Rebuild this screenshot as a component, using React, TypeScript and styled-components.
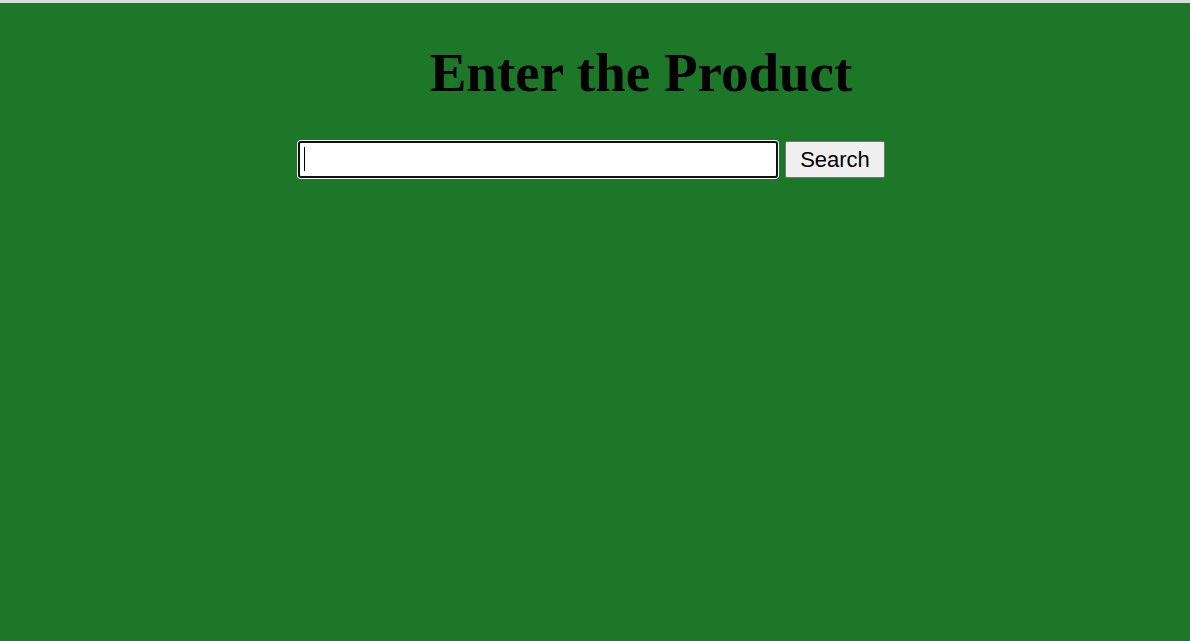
import React from "react";
import styled, { createGlobalStyle } from "styled-components";

const Global = createGlobalStyle`
  html, body { margin: 0; padding: 0; background: #1c7729; }
  #root { min-height: 100vh; }
`;

const Page = styled.div`
  min-height: 641px;
  background: #1c7729;
  border-top: 3px solid #dadada;
  box-sizing: border-box;
  display: flex;
  flex-direction: column;
  align-items: stretch;
`;

const Title = styled.h1`
  margin: 39px 0 0;
  padding-left: 92px;
  text-align: center;
  font-family: "Liberation Serif", "Times New Roman", serif;
  font-weight: bold;
  font-size: 55px;
  line-height: 62px;
  color: #000;
`;

const SearchRow = styled.form`
  margin-top: 36px;
  padding-right: 8px;
  display: flex;
  justify-content: center;
  align-items: center;
  gap: 6px;
`;

const InputWrap = styled.div`
  position: relative;
  display: flex;
`;

const SearchInput = styled.input`
  box-sizing: border-box;
  width: 480px;
  height: 37px;
  margin: 1px;
  border: 2px solid #101010;
  border-radius: 3px;
  box-shadow: 0 0 0 1px #ffffff;
  background: #fff;
  outline: none;
  padding: 0 5px;
  font-family: "Liberation Sans", Arial, sans-serif;
  font-size: 20px;
  color: #000;
`;

const Caret = styled.span`
  position: absolute;
  left: 7px;
  top: 7px;
  width: 1px;
  height: 24px;
  background: #000;
`;

const SearchButton = styled.button`
  box-sizing: border-box;
  width: 100px;
  height: 37px;
  background: #efefef;
  border: 1px solid #767676;
  border-radius: 2px;
  font-family: "Liberation Sans", Arial, sans-serif;
  font-size: 22px;
  color: #000;
  padding: 0;
  cursor: pointer;
`;

export default function App() {
  return (
    <>
      <Global />
      <Page>
        <Title>Enter the Product</Title>
        <SearchRow onSubmit={(e) => e.preventDefault()}>
          <InputWrap>
            <SearchInput type="text" aria-label="Product" />
            <Caret />
          </InputWrap>
          <SearchButton type="submit">Search</SearchButton>
        </SearchRow>
      </Page>
    </>
  );
}
